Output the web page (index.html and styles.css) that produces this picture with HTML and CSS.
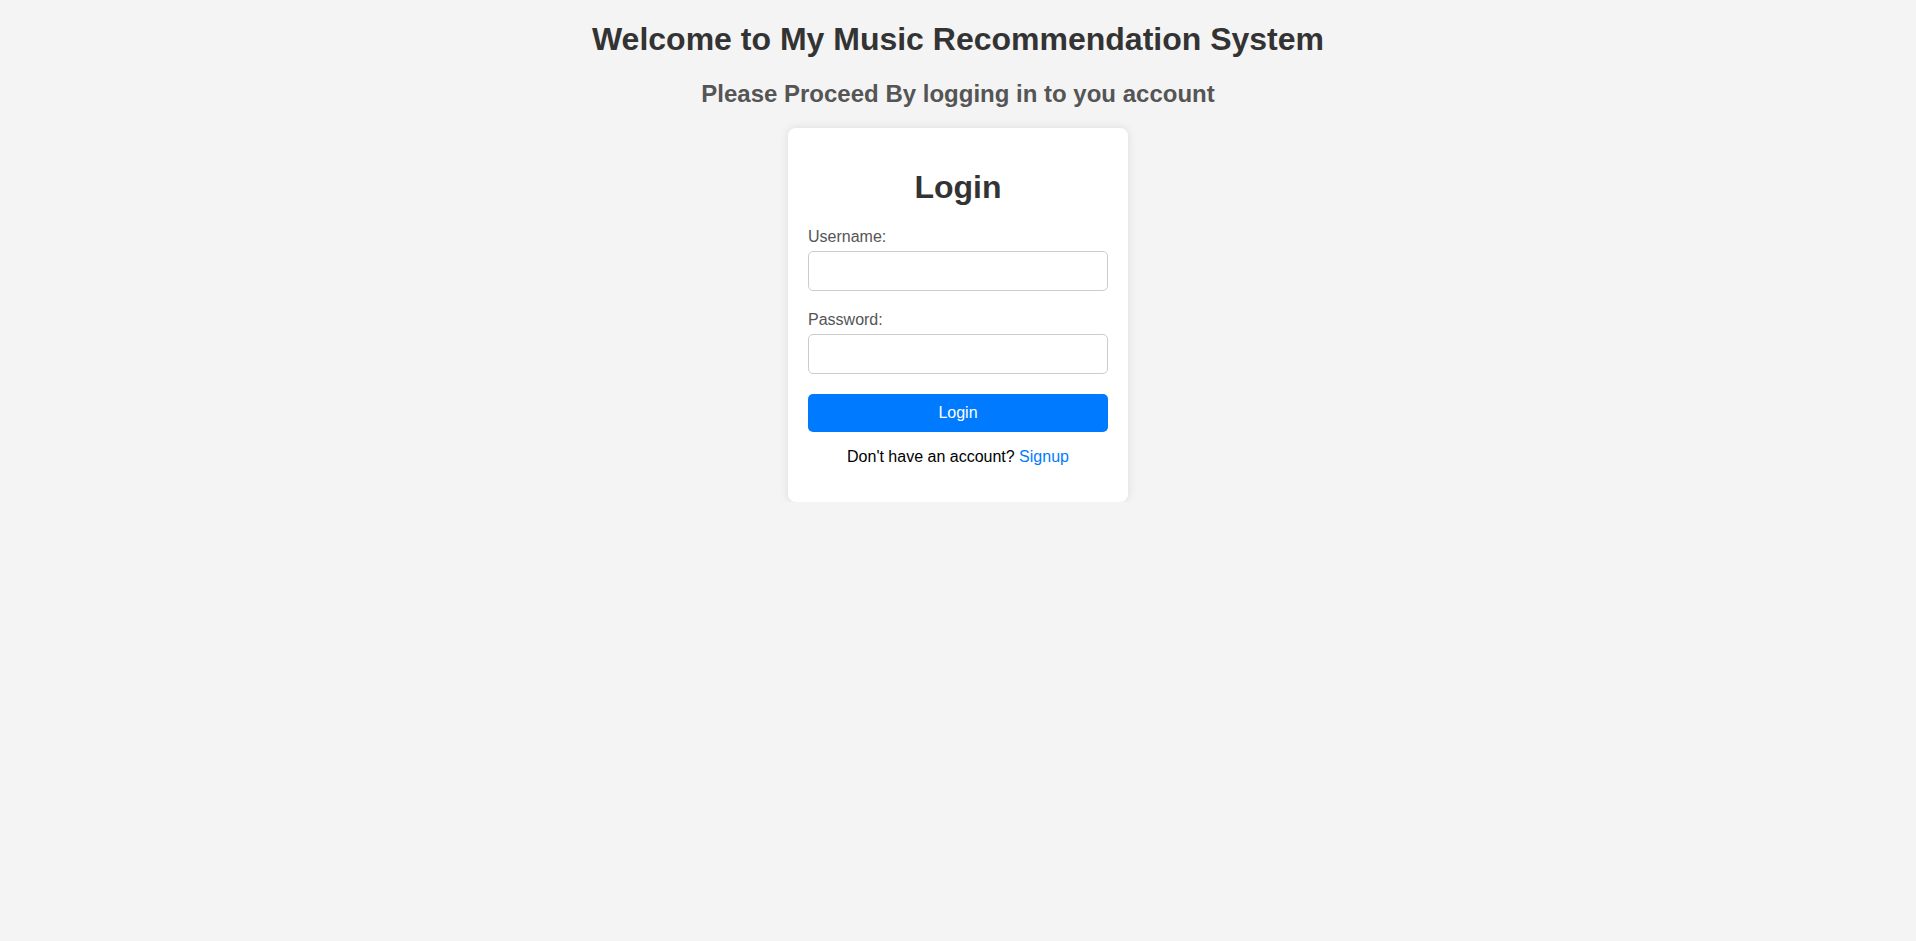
FILE: index.html
```html
<!DOCTYPE html>
<html lang="en">
<head>
<meta charset="utf-8">
<title>Login</title>
<link rel="stylesheet" href="styles.css">
</head>
<body>
<h1 class="title">Welcome to My Music Recommendation System</h1>
<h2 class="subtitle">Please Proceed By logging in to you account</h2>
<div class="card">
  <h1 class="card-title">Login</h1>
  <form class="form">
    <div class="group">
      <label class="label" for="username">Username:</label>
      <input class="input" type="text" id="username">
    </div>
    <div class="group">
      <label class="label" for="password">Password:</label>
      <input class="input" type="password" id="password">
    </div>
    <button class="button" type="button">Login</button>
  </form>
  <p class="signup">Don't have an account? <a class="link" href="#">Signup</a></p>
</div>
</body>
</html>
```
FILE: styles.css
```css
body {
  margin: 0 8px;
  background: #f4f4f4;
  font-family: "Liberation Sans", Arial, sans-serif;
  text-align: center;
}
.title {
  font-size: 32px;
  margin: 21.44px 0;
  color: #333;
}
.subtitle {
  font-size: 24px;
  margin: 19.92px 0;
  color: #555;
}
.card {
  width: 300px;
  margin: 0 auto;
  padding: 20px;
  background: #fff;
  border-radius: 8px;
  box-shadow: 0 0 10px rgba(0, 0, 0, 0.1);
}
.card-title {
  font-size: 32px;
  margin: 21.44px 0;
  color: #333;
}
.form {
  text-align: left;
}
.group {
  margin-bottom: 20px;
}
.label {
  display: block;
  font-size: 16px;
  color: #555;
  margin-bottom: 5px;
}
.input {
  display: block;
  width: 100%;
  box-sizing: border-box;
  padding: 10px;
  font-size: 16px;
  font-family: "Liberation Sans", Arial, sans-serif;
  border: 1px solid #ccc;
  border-radius: 5px;
  margin: 0;
}
.button {
  display: block;
  width: 100%;
  padding: 10px;
  font-size: 16px;
  font-family: "Liberation Sans", Arial, sans-serif;
  background: #007bff;
  color: #fff;
  border: none;
  border-radius: 5px;
  margin: 0;
}
.signup {
  font-size: 16px;
  color: #000;
  margin: 16px 0;
}
.link {
  color: #007bff;
  text-decoration: none;
}
```
